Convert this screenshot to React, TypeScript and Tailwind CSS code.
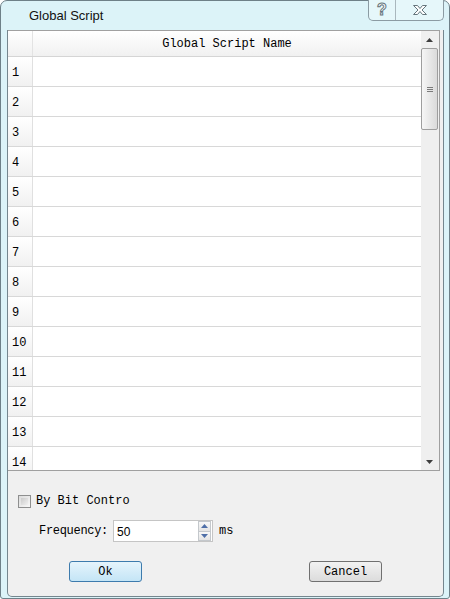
import React from 'react';

const rows = Array.from({ length: 14 }, (_, i) => i + 1);

const TitleButtons: React.FC = () => (
  <div className="absolute top-[-1px] right-[5px] flex h-[21px] w-[76px] rounded-b-[5px] border border-t-0 border-[#8b9ba3] bg-[#e6f7fa]">
    <div className="flex w-[27px] items-center justify-center border-r border-[#a9b7bd]">
      <span className="text-[16px] font-bold leading-none text-white [-webkit-text-stroke:1px_#66767d] [font-family:'Liberation_Sans',sans-serif]">?</span>
    </div>
    <div className="flex flex-1 items-center justify-center">
      <svg width="16" height="12" viewBox="0 0 16 12">
        <path d="M1.5 1.5h4l2.5 3 2.5-3h4l-4.5 4.5 4.5 4.5h-4l-2.5-3-2.5 3h-4l4.5-4.5z" fill="#ffffff" stroke="#66767d" strokeWidth="1" />
      </svg>
    </div>
  </div>
);

const Scrollbar: React.FC = () => (
  <div className="flex w-[18px] flex-col bg-[#efefef] pr-[1px]">
    <div className="flex h-[17px] items-center justify-center">
      <svg width="7" height="4" viewBox="0 0 7 4"><path d="M3.5 0L7 4H0z" fill="#3d3d3d" /></svg>
    </div>
    <div className="flex h-[82px] items-center justify-center rounded-[2px] border border-[#9e9e9e] bg-linear-to-r from-[#f6f6f6] to-[#dadada]">
      <div className="flex flex-col gap-[1px]">
        <div className="h-[1px] w-[6px] bg-[#7a7a7a]" />
        <div className="h-[1px] w-[6px] bg-[#7a7a7a]" />
        <div className="h-[1px] w-[6px] bg-[#7a7a7a]" />
      </div>
    </div>
    <div className="flex-1" />
    <div className="flex h-[17px] items-center justify-center">
      <svg width="7" height="4" viewBox="0 0 7 4"><path d="M0 0h7L3.5 4z" fill="#3d3d3d" /></svg>
    </div>
  </div>
);

const App: React.FC = () => {
  return (
    <div className="relative flex h-[599px] w-[450px] flex-col rounded-t-[7px] rounded-b-[3px] border border-[#6e8088] bg-[#dcf3f8] [font-family:'Liberation_Mono',monospace] text-[12px] text-black">
      <div className="relative h-[29px]">
        <span className="absolute left-[28px] top-[5px] text-[13px] [font-family:'Liberation_Sans',sans-serif] text-[#111]">Global Script</span>
        <TitleButtons />
      </div>

      <div className="mb-[1px] ml-[6px] mr-[5px] flex flex-1 flex-col rounded-b-[5px] border-x border-b border-[#75868e] bg-[#f0f0f0]">
        <div className="mr-[3px] flex h-[441px] overflow-hidden border-y border-r border-[#a0a0a0] bg-white">
          <div className="flex flex-1 flex-col overflow-hidden">
            <div className="flex h-[26px] shrink-0 border-b border-[#d5d5d5] bg-linear-to-b from-white to-[#f1f1f1]">
              <div className="w-[25px] border-r border-[#e3e3e3]" />
              <div className="flex flex-1 items-center justify-center">Global Script Name</div>
            </div>
            {rows.map((n) => (
              <div key={n} className="flex h-[30px] shrink-0 border-b border-[#d8d8d8]">
                <div className="flex w-[25px] items-center border-r border-[#e0e0e0] bg-linear-to-b from-white to-[#f1f1f1] pl-[4px] pt-[2px]">{n}</div>
                <div className="flex-1" />
              </div>
            ))}
          </div>
          <Scrollbar />
        </div>

        <label className="ml-[10px] mt-[21px] flex items-center gap-[5px]">
          <span className="h-[13px] w-[13px] border border-[#8e8f8f] bg-linear-to-br from-[#dcdcdc] to-[#f8f8f8] p-[2px]">
            <span className="block h-full w-full bg-linear-to-br from-[#cbcbcb] to-[#f0f0f0]" />
          </span>
          <span>By Bit Contro</span>
        </label>

        <div className="ml-[31px] mt-[10px] flex items-center">
          <span className="w-[74px] tracking-[-0.3px]">Frequency:</span>
          <div className="flex h-[22px] w-[100px] items-center border border-[#c5c5c5] bg-white">
            <span className="flex-1 pl-[3px] pt-[1px] [font-family:'Liberation_Sans',sans-serif]">50</span>
            <div className="mr-[1px] flex h-[20px] w-[13px] flex-col">
              <div className="flex flex-1 items-center justify-center border border-[#c4c8cc] bg-linear-to-b from-[#f8f8f8] to-[#e4e4e4]">
                <svg width="7" height="4" viewBox="0 0 7 4"><path d="M3.5 0L7 4H0z" fill="#4f6fa8" /></svg>
              </div>
              <div className="flex flex-1 items-center justify-center border border-t-0 border-[#c4c8cc] bg-linear-to-b from-[#f8f8f8] to-[#e4e4e4]">
                <svg width="7" height="4" viewBox="0 0 7 4"><path d="M0 0h7L3.5 4z" fill="#4f6fa8" /></svg>
              </div>
            </div>
          </div>
          <span className="ml-[6px]">ms</span>
        </div>

        <div className="mt-[19px] flex">
          <button className="ml-[61px] flex h-[21px] w-[73px] items-center justify-center rounded-[3px] border border-[#3d7bad] bg-linear-to-b from-[#e5f4fc] to-[#c4e5f6]">Ok</button>
          <button className="ml-[167px] flex h-[21px] w-[73px] items-center justify-center rounded-[3px] border border-[#707070] bg-linear-to-b from-[#f2f2f2] to-[#dcdcdc]">Cancel</button>
        </div>
      </div>
    </div>
  );
};

export default App;
